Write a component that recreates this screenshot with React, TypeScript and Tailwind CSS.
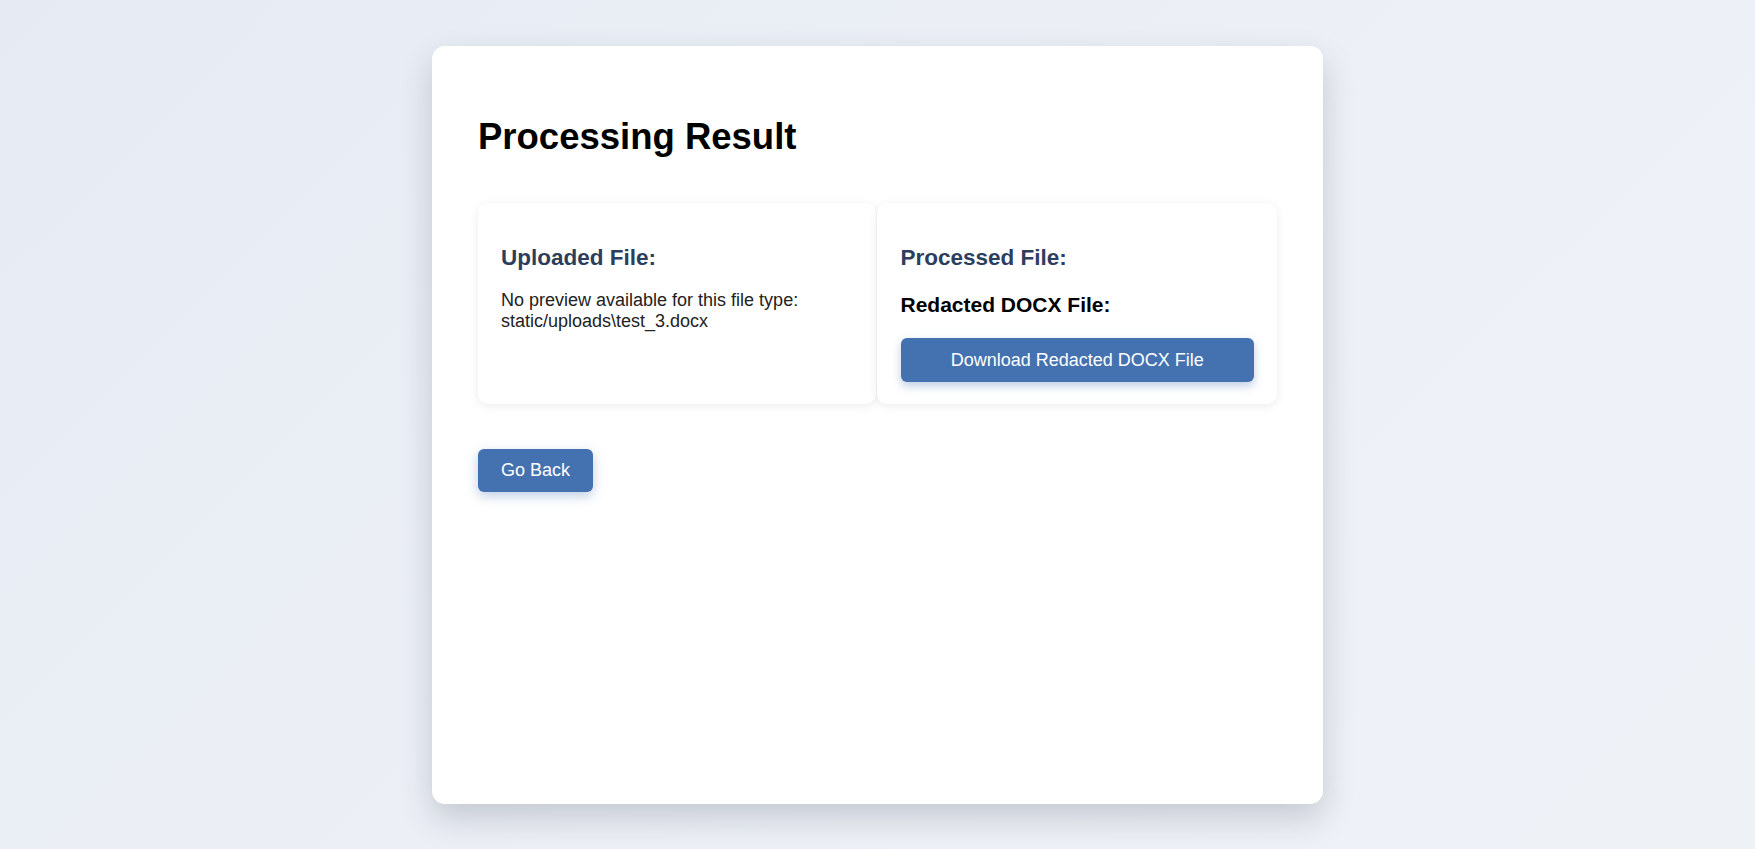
export default function App() {
  return (
    <div
      className="min-h-screen w-full bg-[linear-gradient(135deg,#e6ebf3_0%,#edf0f6_60%,#eef1f6_100%)] pt-[46px] pb-[45px]"
      style={{ fontFamily: '"Liberation Sans", Arial, sans-serif' }}
    >
      {/* Result card */}
      <div className="mx-auto flex h-[758px] w-[891px] flex-col rounded-[13px] bg-white px-[46px] pt-[70px] shadow-[0_14px_32px_rgba(40,50,70,0.2)]">
        <h1 className="text-[36.5px] leading-[41px] font-bold text-black">Processing Result</h1>

        <div className="mt-[46px] flex gap-px">
          {/* Uploaded */}
          <div className="w-[398px] rounded-[10px] bg-white pr-6 pl-[23px] pt-[42px] pb-6 shadow-[0_2px_10px_rgba(0,0,0,0.08)]">
            <h2 className="text-[22.5px] leading-[26px] font-bold text-[#2c3e5c]">Uploaded File:</h2>
            <p className="mt-[19px] text-[18px] leading-[20.7px] text-[#222]">
              No preview available for this file type:
              <br />
              static/uploads\test_3.docx
            </p>
          </div>

          {/* Processed */}
          <div className="w-[401px] rounded-[10px] bg-white pr-[23px] pl-6 pt-[42px] pb-[22px] shadow-[0_2px_10px_rgba(0,0,0,0.08)]">
            <h2 className="text-[22.5px] leading-[26px] font-bold text-[#2c3e5c]">Processed File:</h2>
            <h3 className="mt-[22px] text-[21px] leading-[24px] font-bold text-black">Redacted DOCX File:</h3>
            <button className="mt-[21px] flex h-[44px] w-full items-center justify-center rounded-[6px] bg-[#4472b0] text-[18px] text-white shadow-[0_4px_10px_rgba(68,114,176,0.35)]">
              Download Redacted DOCX File
            </button>
          </div>
        </div>

        <div className="mt-[45px]">
          <button className="flex h-[43px] items-center rounded-[6px] bg-[#4472b0] px-[23px] text-[18px] text-white shadow-[0_4px_12px_rgba(68,114,176,0.35)]">
            Go Back
          </button>
        </div>
      </div>
    </div>
  );
}
